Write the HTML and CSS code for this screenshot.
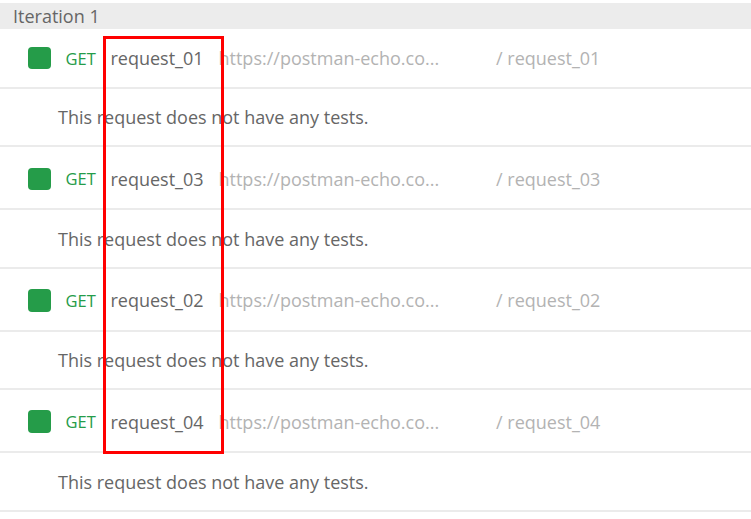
FILE: index.html
```html
<!DOCTYPE html>
<html lang="en">
<head>
    <meta charset="UTF-8">
    <title>Run results</title>
    <link rel="stylesheet" href="styles.css">
</head>
<body>
    <div class="iteration">Iteration 1</div>

    <div class="request first">
        <span class="status"></span>
        <span class="method">GET</span>
        <span class="name">request_01</span>
        <span class="url">https://postman-echo.co...</span>
        <span class="path">/ request_01</span>
    </div>
    <div class="tests">This request does not have any tests.</div>

    <div class="request">
        <span class="status"></span>
        <span class="method">GET</span>
        <span class="name">request_03</span>
        <span class="url">https://postman-echo.co...</span>
        <span class="path">/ request_03</span>
    </div>
    <div class="tests">This request does not have any tests.</div>

    <div class="request">
        <span class="status"></span>
        <span class="method">GET</span>
        <span class="name">request_02</span>
        <span class="url">https://postman-echo.co...</span>
        <span class="path">/ request_02</span>
    </div>
    <div class="tests">This request does not have any tests.</div>

    <div class="request">
        <span class="status"></span>
        <span class="method">GET</span>
        <span class="name">request_04</span>
        <span class="url">https://postman-echo.co...</span>
        <span class="path">/ request_04</span>
    </div>
    <div class="tests">This request does not have any tests.</div>

    <div class="highlight"></div>
</body>
</html>
```

FILE: styles.css
```css
html, body {
    height: 100%;
}
body {
    position: relative;
    margin: 0;
    padding-top: 3px;
    box-sizing: border-box;
    overflow: hidden;
    background-color: #fff;
    font-family: "Open Sans", sans-serif;
    color: #666;
}
.iteration {
    height: 26px;
    line-height: 26px;
    padding-left: 13px;
    background-color: #ececec;
    font-size: 18px;
}
.request {
    display: flex;
    align-items: center;
    box-sizing: border-box;
    height: 63px;
    padding-top: 2px;
    border-bottom: 2px solid #ebebeb;
    font-size: 18px;
}
.request.first {
    height: 60px;
    padding-top: 0;
}
.status {
    width: 23px;
    height: 22.5px;
    margin-left: 28px;
    border-radius: 4px;
    background-color: #259c49;
}
.method {
    width: 45px;
    margin-left: 14.5px;
    font-size: 16.5px;
    color: #259c49;
}
.name {
    width: 108px;
}
.url {
    width: 277.5px;
    color: #b3b3b3;
}
.path {
    color: #b3b3b3;
}
.tests {
    box-sizing: border-box;
    height: 58.4px;
    padding-top: 0.4px;
    line-height: 56px;
    padding-left: 58px;
    border-bottom: 2px solid #ebebeb;
    font-size: 18px;
}
/* red box drawn over the name column */
.highlight {
    position: absolute;
    left: 103px;
    top: 36px;
    width: 115px;
    height: 412px;
    border: 3px solid #f00;
}
```
